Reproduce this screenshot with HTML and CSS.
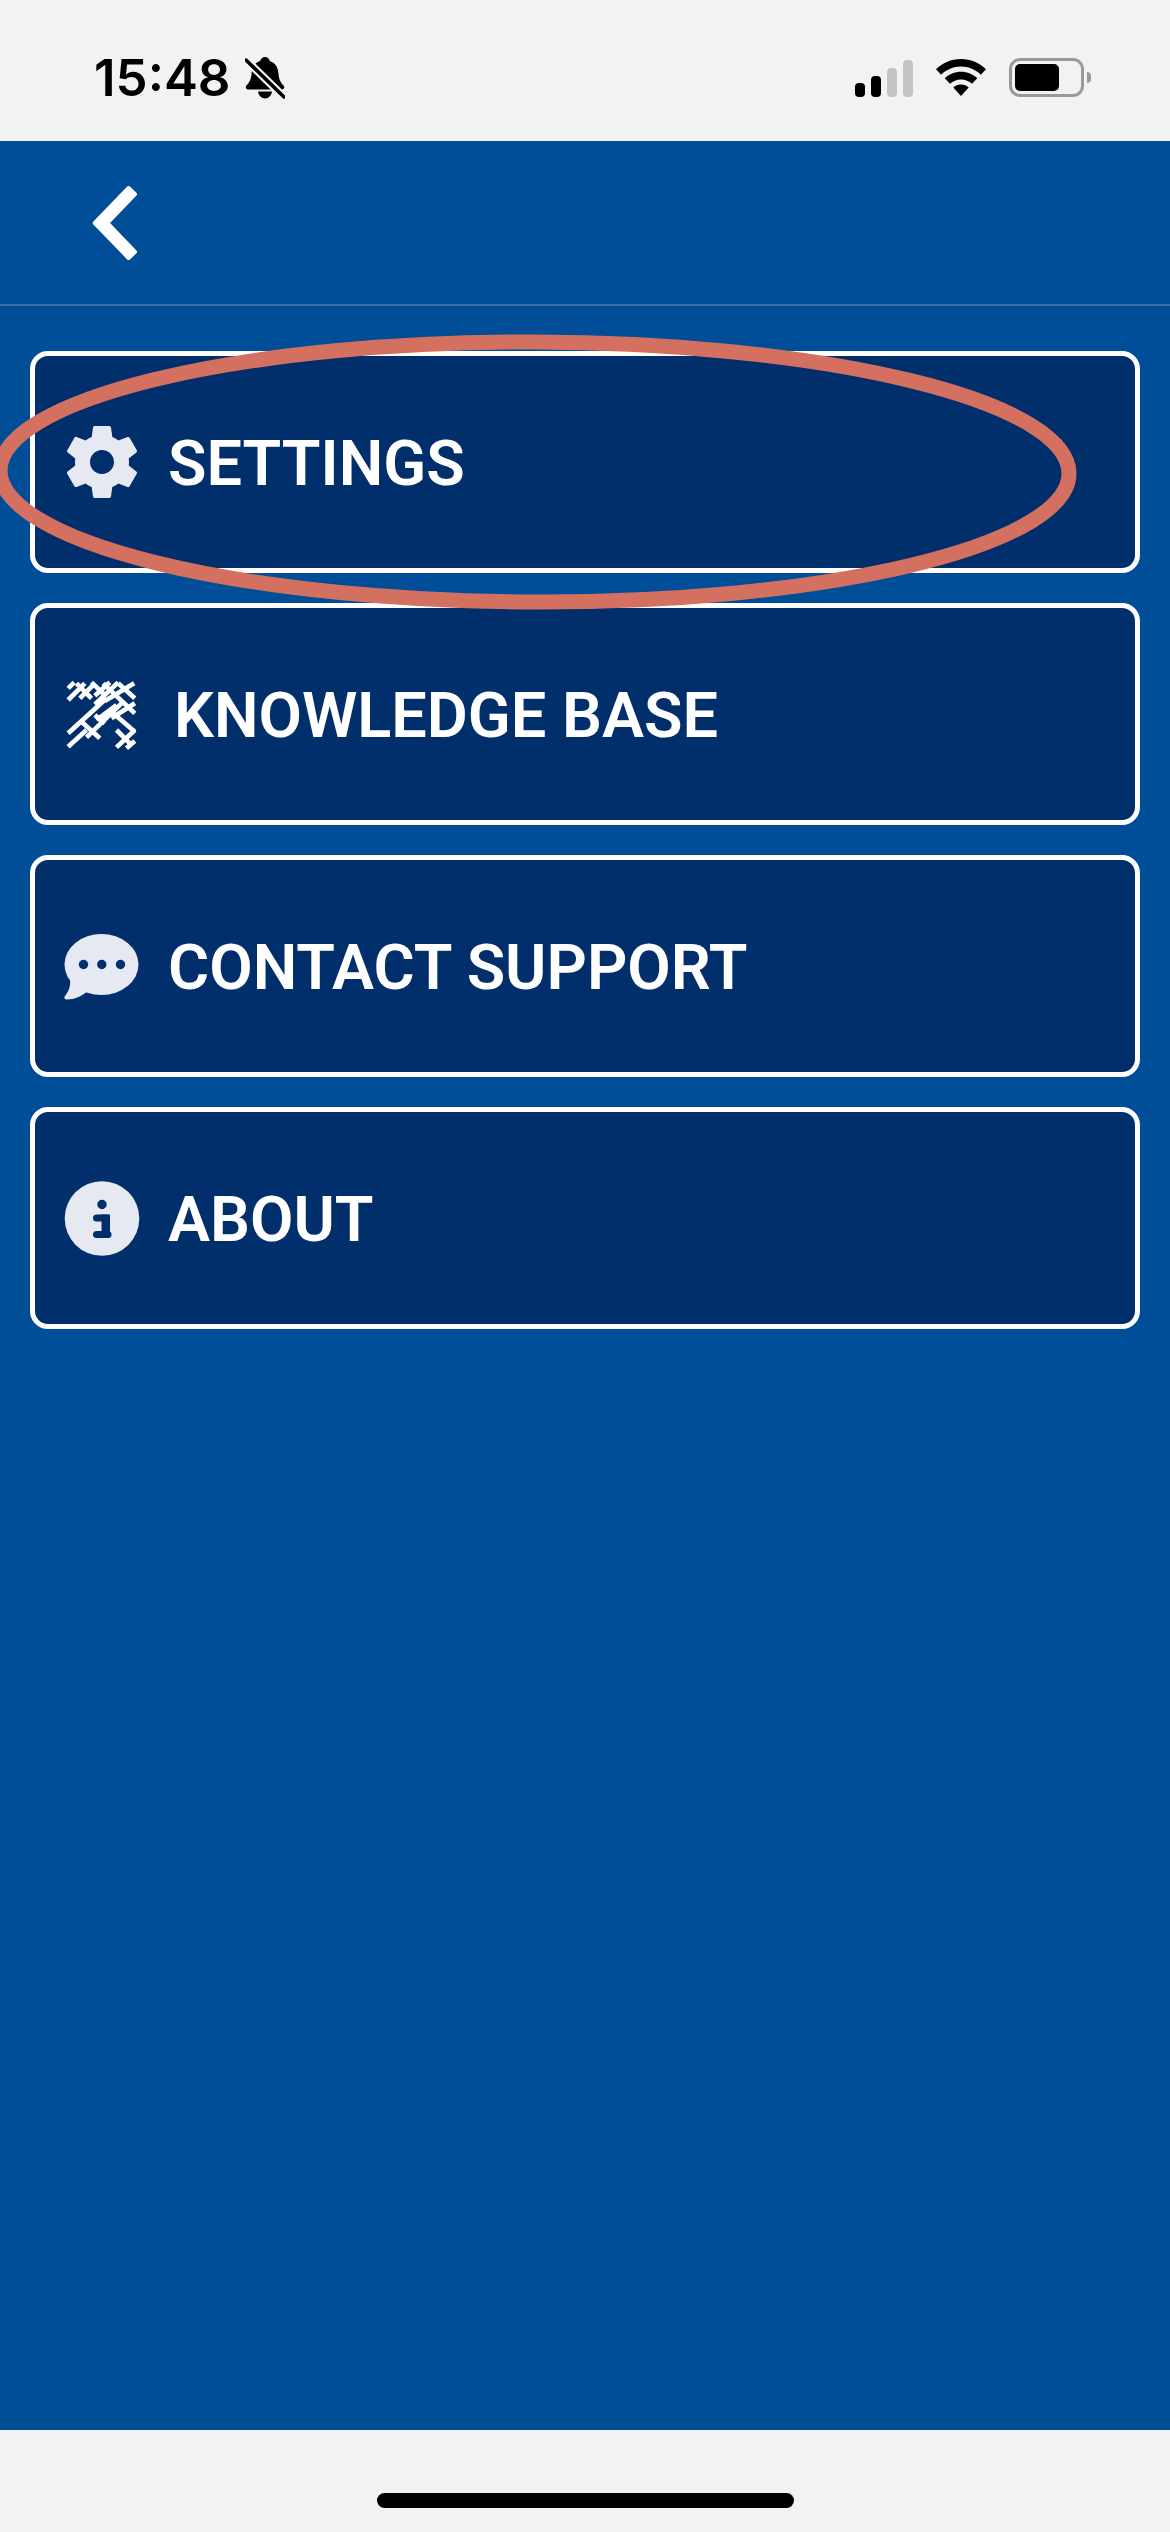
FILE: index.html
```html
<!DOCTYPE html>
<html lang="en">
<head>
  <meta charset="UTF-8" />
  <title>Menu</title>
  <meta name="viewport" content="width=device-width, initial-scale=1.0" />
  <link rel="stylesheet" href="styles.css">
</head>
<body>
  <div class="status-bar">
    <div class="status-left">
      <span class="time">15:48</span>
      <svg class="bell" viewBox="0 0 40 42">
        <path d="M20 0c2.500 0 4.500 1.800 4.800 4C31 6 33 11 33.500 17 34 23 36 26 38.500 28.500 40 30 39 32.500 37 32.500H3C1 32.500 0 30 1.500 28.500 4 26 6 23 6.500 17 7 11 9 6 15.200 4 15.500 1.800 17.500 0 20 0z"/>
        <path d="M13 34.500h14c-.5 4-3.500 7-7 7s-6.500-3-7-7z"/>
        <line class="bell-gap" x1="1" y1="3" x2="39" y2="40"/>
        <line class="bell-slash" x1="1" y1="3" x2="39" y2="40"/>
      </svg>
    </div>
    <div class="status-right">
      <div class="signal">
        <span class="bar bar-1"></span>
        <span class="bar bar-2"></span>
        <span class="bar bar-3"></span>
        <span class="bar bar-4"></span>
      </div>
      <svg class="wifi" viewBox="0 0 50 37">
        <path d="M25 0c9.800 0 18.500 3.900 25 10.200l-5.200 5.500C39.700 10.800 32.700 7.600 25 7.600S10.300 10.800 5.200 15.700L0 10.200C6.500 3.900 15.200 0 25 0z"/>
        <path d="M25 12.800c6.300 0 12 2.400 16.300 6.500l-5.300 5.500c-2.900-2.700-6.700-4.400-11-4.400s-8.100 1.700-11 4.400l-5.300-5.500C13 15.200 18.700 12.800 25 12.800z"/>
        <path d="M25 25.500c3 0 5.700 1.100 7.700 3L25 37l-7.700-8.500c2-1.900 4.700-3 7.700-3z"/>
      </svg>
      <div class="battery">
        <div class="battery-body"><div class="battery-level"></div></div>
        <div class="battery-nub"></div>
      </div>
    </div>
  </div>

  <header>
    <svg class="back" viewBox="0 0 46 78">
      <polygon points="36.600,4 43,10.200 15.200,39 43,67.800 36.600,74 2.800,39"/>
    </svg>
  </header>

  <main class="menu">
    <a class="menu-item" href="#">
      <svg class="menu-icon" viewBox="0 0 24 24">
        <path d="M19.140 12.940c.04-.3.06-.61.06-.94 0-.32-.02-.64-.07-.94l2.030-1.580c.18-.14.23-.41.12-.61l-1.920-3.320c-.12-.22-.37-.29-.59-.22l-2.390.96c-.5-.38-1.030-.7-1.620-.94l-.36-2.540c-.04-.24-.24-.41-.48-.41h-3.840c-.24 0-.43.17-.47.41l-.36 2.540c-.59.24-1.130.57-1.620.94l-2.390-.96c-.22-.08-.47 0-.59.22L2.740 8.870c-.12.21-.08.47.12.61l2.030 1.580c-.05.3-.09.63-.09.94s.02.64.07.94l-2.030 1.580c-.18.14-.23.41-.12.61l1.920 3.320c.12.22.37.29.59.22l2.390-.96c.5.38 1.030.7 1.620.94l.36 2.540c.05.24.24.41.48.41h3.840c.24 0 .44-.17.47-.41l.36-2.540c.59-.24 1.130-.56 1.620-.94l2.390.96c.22.08.47 0 .59-.22l1.920-3.320c.12-.22.07-.47-.12-.61l-2.010-1.580zM12 15.200c-1.760 0-3.200-1.440-3.200-3.200s1.440-3.200 3.200-3.200 3.200 1.440 3.200 3.200-1.440 3.200-3.200 3.200z"/>
      </svg>
      <span class="menu-label">SETTINGS</span>
    </a>
    <a class="menu-item" href="#">
      <svg class="menu-icon hatch" viewBox="0 0 270 270">
        <g transform="translate(13.500 18)">
          <path d="M20 40 38 22M20 75 70 25M55 70 100 25M100 62 145 22M100 88 170 22M130 78 218 25M20 175 135 70M20 215 75 165M75 187 180 85M105 135 165 90M150 130 220 85M165 217 220 165M195 220 220 198"/>
          <path d="M45 25 90 70M90 22 130 60M125 25 220 115M170 25 220 70M60 140 115 190M100 120 130 145M150 110 220 170M165 165 205 205"/>
        </g>
      </svg>
      <span class="menu-label label-shift">KNOWLEDGE BASE</span>
    </a>
    <a class="menu-item" href="#">
      <svg class="menu-icon" viewBox="0 0 90 90">
        <ellipse cx="44.500" cy="43.500" rx="37" ry="30.500"/>
        <path d="M13 58C14 66 11 71 8 75 6.500 77 8 78.500 10 78.500 17 78.500 25 75 31 70z"/>
        <circle class="cut" cx="26.500" cy="43.500" r="4.700"/>
        <circle class="cut" cx="44.800" cy="43.500" r="4.700"/>
        <circle class="cut" cx="63.500" cy="43.500" r="4.700"/>
      </svg>
      <span class="menu-label">CONTACT SUPPORT</span>
    </a>
    <a class="menu-item" href="#">
      <svg class="menu-icon" viewBox="0 0 90 90">
        <circle cx="45" cy="45.500" r="37.300"/>
        <circle class="cut" cx="45" cy="31.500" r="4.700"/>
        <rect class="cut" x="36" y="41.500" width="17" height="7" rx="3.500"/>
        <rect class="cut" x="44.500" y="41.500" width="8.500" height="20"/>
        <rect class="cut" x="36" y="58" width="18.500" height="7" rx="3.500"/>
      </svg>
      <span class="menu-label">ABOUT</span>
    </a>
  </main>

  <div class="home-bar">
    <div class="home-indicator"></div>
  </div>

  <!-- hand drawn mark over the first row -->
  <svg class="mark" viewBox="0 0 1170 2532">
    <ellipse cx="534.500" cy="472" rx="534.500" ry="130" transform="rotate(.16 535 472)"/>
  </svg>
</body>
</html>
```

FILE: styles.css
```css
* { box-sizing: border-box; margin: 0; padding: 0; }

body {
  position: relative;
  width: 1170px;
  height: 2532px;
  display: flex;
  flex-direction: column;
  overflow: hidden;
  font-family: Roboto, sans-serif;
  background-color: #004e98;
  color: #fff;
}

.status-bar {
  height: 141px;
  flex: none;
  display: flex;
  justify-content: space-between;
  align-items: flex-start;
  padding: 57px 79px 0 94px;
  background-color: #f2f2f2;
  color: #000;
}

.status-left {
  display: flex;
  align-items: center;
  gap: 14px;
}

.time {
  font-family: Inter, sans-serif;
  font-weight: 600;
  font-size: 51px;
  line-height: 42px;
}

.bell {
  width: 40px;
  height: 42px;
  fill: #000;
}

.bell-gap {
  stroke: #f2f2f2;
  stroke-width: 8px;
}

.bell-slash {
  stroke: #000;
  stroke-width: 3.5px;
  stroke-linecap: round;
}

.status-right {
  display: flex;
  align-items: flex-end;
  height: 40px;
  gap: 23px;
}

.signal {
  display: flex;
  align-items: flex-end;
  gap: 6px;
  height: 38px;
}

.bar {
  width: 10px;
  border-radius: 4px;
  background-color: #000;
}

.bar-1 { height: 14px; }
.bar-2 { height: 21px; }
.bar-3 { height: 29px; background-color: #c4c4c4; }
.bar-4 { height: 37px; background-color: #c4c4c4; }

.wifi {
  width: 50px;
  height: 37px;
  fill: #000;
  margin-bottom: 1px;
}

.battery {
  display: flex;
  align-items: center;
  gap: 3px;
}

.battery-body {
  width: 75px;
  height: 39px;
  border: 3px solid #999;
  border-radius: 11px;
  padding: 3px;
}

.battery-level {
  width: 44px;
  height: 100%;
  border-radius: 5px;
  background-color: #000;
}

.battery-nub {
  width: 4px;
  height: 11px;
  border-radius: 0 4px 4px 0;
  background-color: #999;
}

header {
  height: 165px;
  flex: none;
  display: flex;
  align-items: center;
  padding-left: 92px;
  border-bottom: 2px solid #3a6fa8;
}

.back {
  width: 46px;
  height: 78px;
  fill: #fff;
  stroke: #fff;
  stroke-width: 4px;
  stroke-linejoin: round;
}

.menu {
  flex: 1;
  display: flex;
  flex-direction: column;
  gap: 30px;
  padding: 45px 30px 0;
}

.menu-item {
  height: 222px;
  display: flex;
  align-items: center;
  gap: 21px;
  padding-left: 22px;
  background-color: #002f6c;
  border: 5px solid #fff;
  border-radius: 18px;
  color: #fff;
  text-decoration: none;
}

.menu-icon {
  width: 90px;
  height: 90px;
  flex: none;
  fill: #e6e9f2;
}

.menu-icon .cut {
  fill: #002f6c;
}

.hatch {
  fill: none;
  stroke: #fff;
  stroke-width: 14px;
}

.menu-label {
  font-size: 63px;
  font-weight: 600;
  line-height: 1;
  padding-top: 2px;
}

.label-shift {
  margin-left: 6px;
}

.home-bar {
  height: 102px;
  flex: none;
  display: flex;
  justify-content: center;
  padding-top: 63px;
  background-color: #f2f2f2;
}

.home-indicator {
  width: 417px;
  height: 15px;
  border-radius: 8px;
  background-color: #000;
}

.mark {
  position: absolute;
  top: 0;
  left: 0;
  width: 1170px;
  height: 2532px;
  fill: none;
  stroke: #d4705f;
  stroke-width: 15px;
  pointer-events: none;
}
```
